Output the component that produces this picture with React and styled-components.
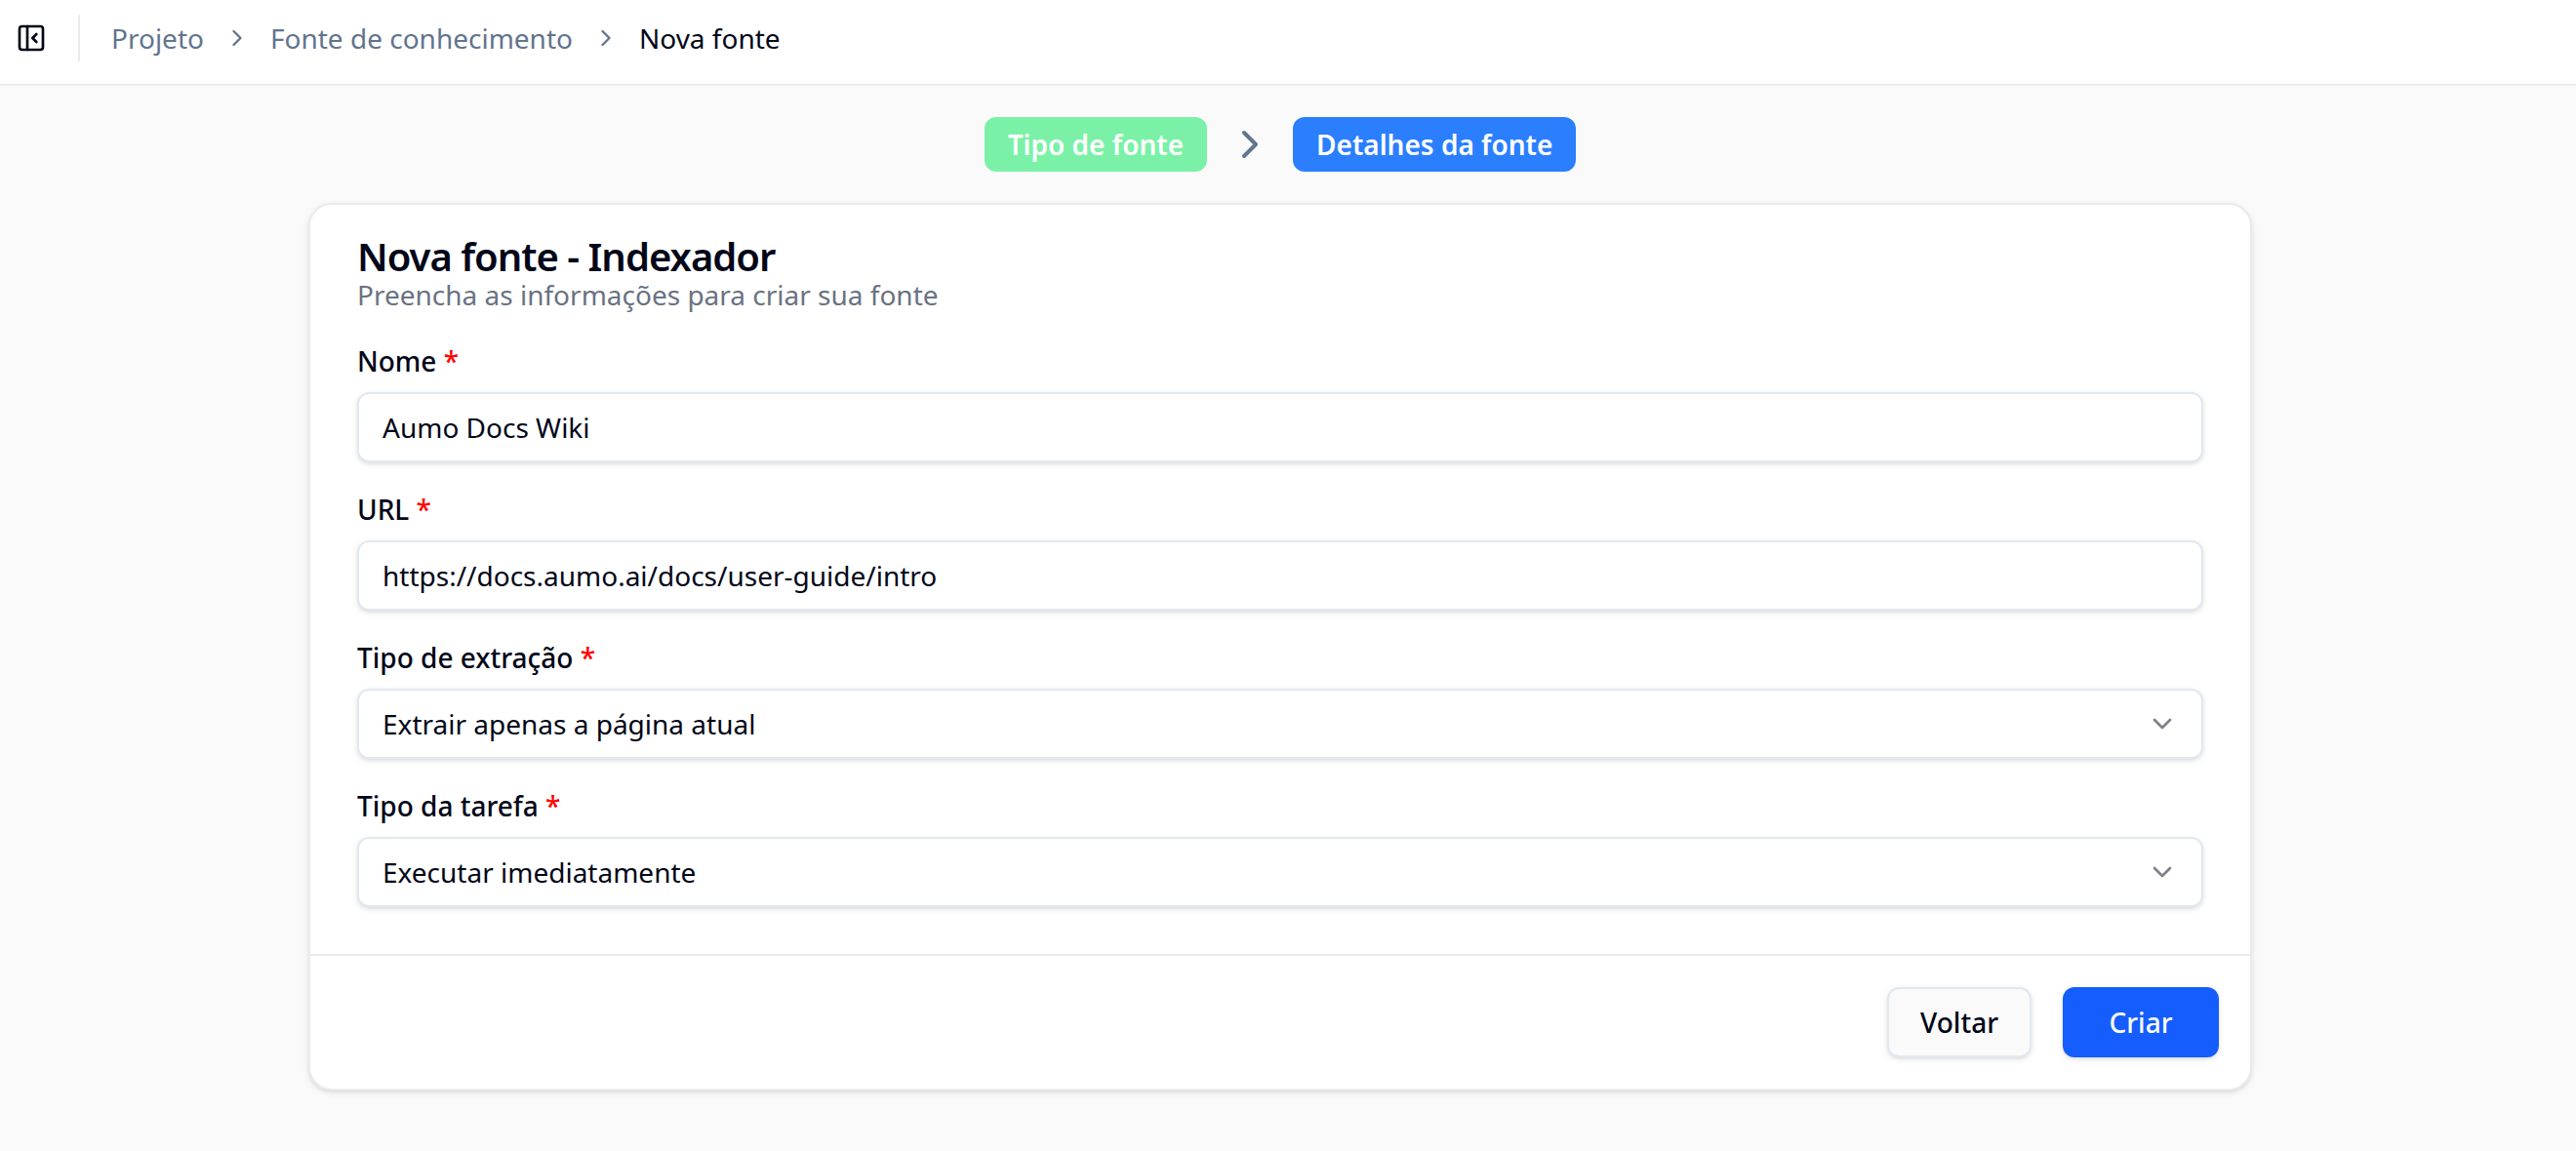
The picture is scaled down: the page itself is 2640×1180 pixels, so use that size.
import React from 'react';
import styled, { createGlobalStyle } from 'styled-components';
import { ChevronDown, ChevronRight, PanelLeftClose } from 'lucide-react';

const GlobalStyle = createGlobalStyle`
    * {
        box-sizing: border-box;
    }

    body {
        margin: 0;
        background: #fafafa;
        color: #020618;
        font-family: 'Noto Sans', sans-serif;
        font-size: 28px;
        line-height: 40px;
    }

    button, input, select {
        font: inherit;
        color: inherit;
    }
`;

const Header = styled.header`
    display: flex;
    align-items: center;
    padding: 15px 16px 23px;
    background: #fff;
    border-bottom: 2px solid #ebebeb;
`;

const SidebarButton = styled.button`
    display: flex;
    padding: 0;
    border: 0;
    background: none;
    cursor: pointer;
`;

const Separator = styled.div`
    width: 2px;
    height: 48px;
    margin: 0 32px;
    background: #ebebeb;
`;

const Breadcrumb = styled.nav`
    display: flex;
    align-items: center;
    gap: 20px;
    color: #62748e;
`;

const Crumb = styled.a`
    color: inherit;
    text-decoration: none;
`;

const CurrentCrumb = styled.span`
    color: #020618;
`;

const Main = styled.main`
    display: flex;
    flex-direction: column;
    align-items: center;
    gap: 32px;
    padding: 32px 16px 32px 0;
`;

const Steps = styled.div`
    display: flex;
    align-items: center;
    gap: 20px;
    color: #62748e;
`;

const Step = styled.span`
    padding: 8px 24px;
    border-radius: 12px;
    background: ${(props) => (props.$active ? '#2b7fff' : '#7bf1a8')};
    color: #fff;
    font-weight: 600;
`;

const Card = styled.form`
    width: 100%;
    max-width: 1992px;
    border: 2px solid #ebebeb;
    border-radius: 24px;
    background: #fff;
    box-shadow: 0 2px 6px rgba(0, 0, 0, 0.1), 0 2px 4px -2px rgba(0, 0, 0, 0.1);
`;

const CardBody = styled.div`
    display: flex;
    flex-direction: column;
    gap: 28px;
    padding: 32px 48px 48px;
`;

const CardHeader = styled.div`
    padding-bottom: 2px;
`;

const Title = styled.h1`
    margin: 0;
    font-size: 40px;
    font-weight: 600;
    letter-spacing: -1px;
    line-height: 42px;
`;

const Subtitle = styled.p`
    margin: 0;
    color: #6a7282;
    line-height: 36px;
`;

const Field = styled.div`
    display: flex;
    flex-direction: column;
    gap: 12px;
`;

const Label = styled.label`
    font-weight: 500;
`;

const Required = styled.span`
    color: #ff0000;
`;

const Input = styled.input`
    width: 100%;
    height: 72px;
    padding: 0 24px;
    border: 2px solid #e2e8f0;
    border-radius: 12px;
    background: #fff;
    box-shadow: 0 2px 6px rgba(0, 0, 0, 0.1), 0 2px 4px -2px rgba(0, 0, 0, 0.1);
`;

const Select = styled(Input).attrs({ as: 'select' })`
    appearance: none;
    grid-area: 1 / 1;
`;

const SelectWrapper = styled.div`
    display: grid;
    align-items: center;
`;

const SelectIcon = styled(ChevronDown)`
    grid-area: 1 / 1;
    justify-self: end;
    margin-right: 26px;
    opacity: 0.5;
    pointer-events: none;
`;

const CardFooter = styled.div`
    display: flex;
    justify-content: flex-end;
    gap: 32px;
    padding: 32px;
    border-top: 2px solid #ebebeb;
`;

const Button = styled.button`
    height: 72px;
    min-width: ${(props) => (props.$primary ? '160px' : '0')};
    padding: 0 32px;
    border: ${(props) => (props.$primary ? '0' : '2px solid #e2e8f0')};
    border-radius: 12px;
    background: ${(props) => (props.$primary ? '#155dfc' : '#fafafa')};
    color: ${(props) => (props.$primary ? '#f8fafc' : '#020618')};
    font-weight: 500;
    box-shadow: 0 2px 6px rgba(0, 0, 0, 0.1), 0 2px 4px -2px rgba(0, 0, 0, 0.1);
    cursor: pointer;
`;

function FormField({ id, label, children }) {
    return (
        <Field>
            <Label htmlFor={id}>
                {label} <Required>*</Required>
            </Label>
            {children}
        </Field>
    );
}

function SelectField({ id, options }) {
    return (
        <SelectWrapper>
            <Select id={id}>
                {options.map((option) => (
                    <option key={option}>{option}</option>
                ))}
            </Select>
            <SelectIcon size={32} />
        </SelectWrapper>
    );
}

function App() {

    const [name, setName] = React.useState('Aumo Docs Wiki');
    const [url, setUrl] = React.useState('https://docs.aumo.ai/docs/user-guide/intro');

    return (
        <>
            <GlobalStyle />
            <Header>
                <SidebarButton type="button" aria-label="Fechar menu">
                    <PanelLeftClose size={32} />
                </SidebarButton>
                <Separator />
                <Breadcrumb>
                    <Crumb href="#projeto">Projeto</Crumb>
                    <ChevronRight size={28} />
                    <Crumb href="#fontes">Fonte de conhecimento</Crumb>
                    <ChevronRight size={28} />
                    <CurrentCrumb>Nova fonte</CurrentCrumb>
                </Breadcrumb>
            </Header>
            <Main>
                <Steps>
                    <Step>Tipo de fonte</Step>
                    <ChevronRight size={48} />
                    <Step $active>Detalhes da fonte</Step>
                </Steps>
                <Card onSubmit={(e) => e.preventDefault()}>
                    <CardBody>
                        <CardHeader>
                            <Title>Nova fonte - Indexador</Title>
                            <Subtitle>Preencha as informações para criar sua fonte</Subtitle>
                        </CardHeader>
                        <FormField id="name" label="Nome">
                            <Input id="name" value={name} onChange={(e) => setName(e.target.value)} />
                        </FormField>
                        <FormField id="url" label="URL">
                            <Input id="url" value={url} onChange={(e) => setUrl(e.target.value)} />
                        </FormField>
                        <FormField id="extraction" label="Tipo de extração">
                            <SelectField id="extraction" options={['Extrair apenas a página atual']} />
                        </FormField>
                        <FormField id="task" label="Tipo da tarefa">
                            <SelectField id="task" options={['Executar imediatamente']} />
                        </FormField>
                    </CardBody>
                    <CardFooter>
                        <Button type="button">Voltar</Button>
                        <Button type="submit" $primary>Criar</Button>
                    </CardFooter>
                </Card>
            </Main>
        </>
    );
}

export default App;
